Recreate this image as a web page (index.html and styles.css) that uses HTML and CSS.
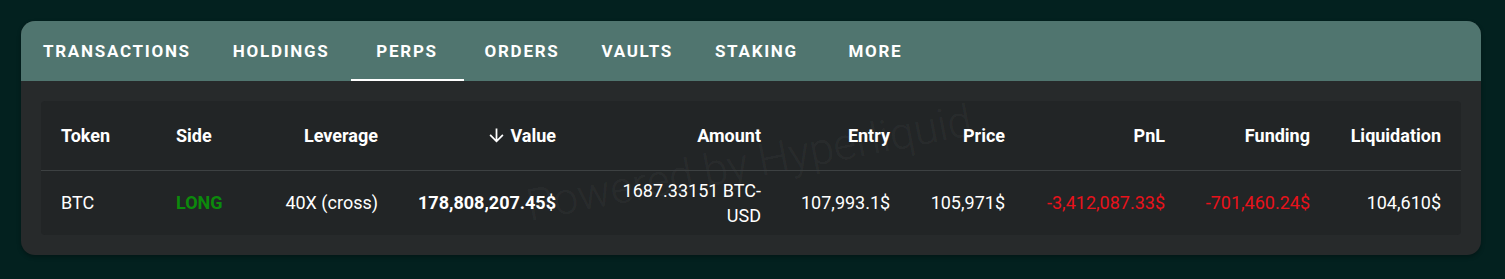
FILE: index.html
```html
<!DOCTYPE html>
<html lang="en">
<head>
<meta charset="utf-8">
<title>Perps</title>
<link rel="stylesheet" href="styles.css">
</head>
<body>
<div class="page">
  <section class="card">
    <nav class="tabs">
      <div class="tab">Transactions</div>
      <div class="tab">Holdings</div>
      <div class="tab active">Perps</div>
      <div class="tab">Orders</div>
      <div class="tab">Vaults</div>
      <div class="tab">Staking</div>
      <div class="tab">More</div>
    </nav>
    <div class="body">
      <div class="table-wrap">
        <table class="grid">
          <colgroup>
            <col class="c-token"><col class="c-side"><col class="c-lev"><col class="c-value"><col class="c-amount">
            <col class="c-entry"><col class="c-price"><col class="c-pnl"><col class="c-funding"><col class="c-liq">
          </colgroup>
          <thead>
            <tr>
              <th class="left">Token</th>
              <th class="left">Side</th>
              <th>Leverage</th>
              <th><svg class="arrow" viewBox="0 0 24 24" width="21" height="21"><path d="M20 12l-1.41-1.41L13 16.17V4h-2v12.17l-5.58-5.59L4 12l8 8 8-8z" fill="currentColor"/></svg>Value</th>
              <th>Amount</th>
              <th>Entry</th>
              <th>Price</th>
              <th>PnL</th>
              <th>Funding</th>
              <th>Liquidation</th>
            </tr>
          </thead>
          <tbody>
            <tr>
              <td class="left">BTC</td>
              <td class="left long">LONG</td>
              <td>40X (cross)</td>
              <td class="strong">178,808,207.45$</td>
              <td>1687.33151 BTC-USD</td>
              <td>107,993.1$</td>
              <td>105,971$</td>
              <td class="neg">-3,412,087.33$</td>
              <td class="neg">-701,460.24$</td>
              <td>104,610$</td>
            </tr>
          </tbody>
        </table>
        <div class="watermark">Powered by Hyperliquid</div>
      </div>
    </div>
  </section>
</div>
</body>
</html>
```

FILE: styles.css
```css
* { box-sizing: border-box; }
html, body { margin: 0; padding: 0; }
body {
  background: #03211f;
  font-family: Roboto, "Liberation Sans", sans-serif;
  color: #ffffff;
}
.page {
  padding: 21px 24px 24px 21px;
}
.card {
  background: #272a2b;
  border-radius: 14px;
  overflow: hidden;
  box-shadow: 0 2px 4px rgba(0,0,0,0.3);
}
.tabs {
  display: flex;
  height: 60px;
  padding-left: 1px;
  background: #50756f;
}
.tab {
  position: relative;
  display: flex;
  align-items: center;
  justify-content: center;
  min-width: 113px;
  padding: 0 21px;
  font-size: 17px;
  font-weight: 700;
  letter-spacing: 1.72px;
  text-transform: uppercase;
  color: #ffffff;
}
.tab.active::after {
  content: "";
  position: absolute;
  left: 0;
  right: 0;
  bottom: 0;
  height: 2px;
  background: #ffffff;
}
.body {
  padding: 20px;
}
.table-wrap {
  position: relative;
  overflow: hidden;
  background: #222526;
  border-radius: 4px;
}
.grid {
  position: relative;
  z-index: 1;
  width: 100%;
  table-layout: fixed;
  border-collapse: collapse;
}
.c-token { width: 115px; }
.c-side { width: 100px; }
.c-lev { width: 142px; }
.c-value { width: 178px; }
.c-amount { width: 205px; }
.c-entry { width: 129px; }
.c-price { width: 115px; }
.c-pnl { width: 160px; }
.c-funding { width: 145px; }
.c-liq { width: 131px; }
th, td {
  padding: 0 20px;
  text-align: right;
  font-size: 18px;
  line-height: 25px;
}
th {
  height: 69px;
  padding-top: 1px;
  font-weight: 700;
  border-bottom: 1px solid #3d4142;
}
td {
  height: 65px;
  font-weight: 400;
}
.left { text-align: left; }
.arrow {
  display: inline-block;
  vertical-align: -4px;
  margin-right: 3px;
}
.long { color: #0c8a0c; font-weight: 700; }
.strong { font-weight: 700; }
.neg { color: #e8121b; }
.watermark {
  position: absolute;
  left: 708px;
  top: 62px;
  transform: translate(-50%, -50%) rotate(-11deg);
  font-size: 44px;
  font-weight: 300;
  white-space: nowrap;
  color: rgba(255,255,255,0.055);
  pointer-events: none;
}
```
